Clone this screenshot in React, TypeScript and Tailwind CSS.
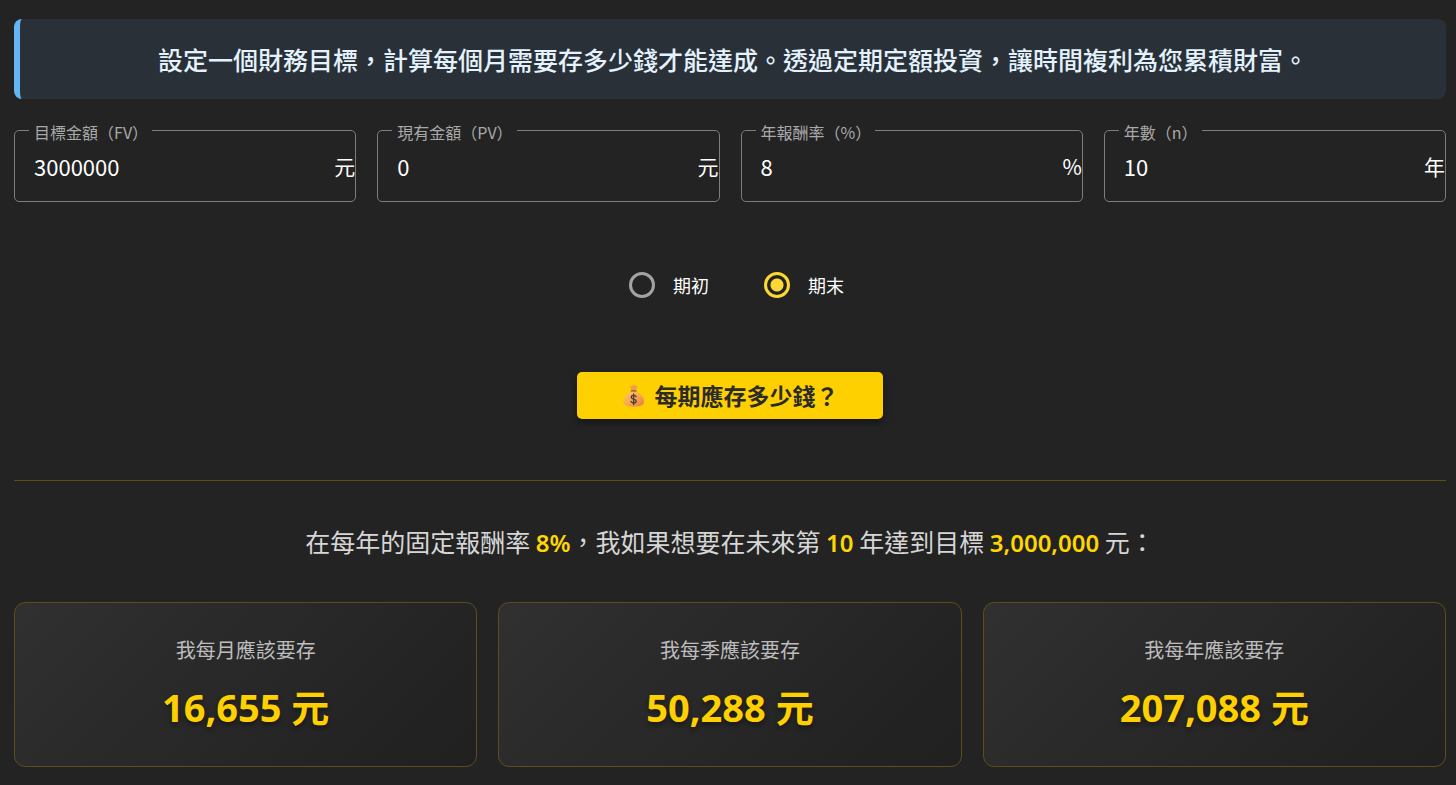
import { useState } from 'react';

type Field = { id: string; label: string; value: string; unit: string };

const fields: Field[] = [
  { id: 'fv', label: '目標金額（FV）', value: '3000000', unit: '元' },
  { id: 'pv', label: '現有金額（PV）', value: '0', unit: '元' },
  { id: 'rate', label: '年報酬率（%）', value: '8', unit: '%' },
  { id: 'years', label: '年數（n）', value: '10', unit: '年' },
];

const results = [
  { label: '我每月應該要存', value: '16,655 元' },
  { label: '我每季應該要存', value: '50,288 元' },
  { label: '我每年應該要存', value: '207,088 元' },
];

function NumberField({ field }: { field: Field }) {
  const [value, setValue] = useState(field.value);
  return (
    <fieldset className="min-w-0 rounded-[5px] border border-[#7d7d7d] pb-[9px] pl-[14px]">
      <legend className="pt-[4px] pr-[4px] pl-[5px] text-[16px] leading-[18px] text-[#a9a9a9]">
        <label htmlFor={field.id}>{field.label}</label>
      </legend>
      <div className="flex h-[51px] items-center pl-[5px] text-[22px] text-white">
        <input
          id={field.id}
          inputMode="decimal"
          value={value}
          onChange={(e) => setValue(e.target.value)}
          className="w-full min-w-0 flex-1 bg-transparent outline-none"
        />
        <span className="text-[21px]">{field.unit}</span>
      </div>
    </fieldset>
  );
}

function MoneyBag() {
  return (
    <svg viewBox="0 0 24 24" className="size-[23px]" aria-hidden="true">
      <defs>
        <linearGradient id="bag" x1="0" y1="0" x2="1" y2="1">
          <stop offset="0" stopColor="#ffc861" />
          <stop offset="0.5" stopColor="#f8a84d" />
          <stop offset="1" stopColor="#e07a48" />
        </linearGradient>
      </defs>
      <path d="M8.200 2.400c1-.5 1.700.3 2.500-.2.700-.6.900-1.100 1.600-1.100.8 0 1 .6 1.700 1.100.8.500 1.600-.2 2.300.300.500.700-1.500 2-2 3.800h-4.200C9.700 4.600 7.600 3.200 8.200 2.400z" fill="#ef9a4c" />
      <path d="M9.900 7.900h4.600c4.400 1.900 8.500 6 8.500 10.200 0 4.200-3.300 5.600-10.800 5.600S1.400 22.300 1.400 18.100c0-4.200 4.100-8.300 8.500-10.200z" fill="url(#bag)" />
      <rect x="9" y="6.200" width="6.400" height="2" rx="1" fill="#b5654a" />
      <path d="M14.700 13.300c-.4-1-1.300-1.400-2.600-1.400-1.500 0-2.500.7-2.500 1.900 0 2.700 5.200 1.200 5.200 4 0 1.300-1.100 2-2.600 2-1.500 0-2.500-.6-2.800-1.700M12.100 10.400v10.900" fill="none" stroke="#4f3a3c" strokeWidth="1.400" strokeLinecap="round" />
    </svg>
  );
}

export default function App() {
  const [timing, setTiming] = useState('end');
  const options = [
    { id: 'begin', label: '期初' },
    { id: 'end', label: '期末' },
  ];
  return (
    <main className="min-h-screen bg-[#232323] pt-[19px] pr-[10px] pb-[18px] pl-[14px] font-['Noto_Sans_CJK_TC',sans-serif]">
      <div className="flex h-[80px] items-center justify-center rounded-[8px] border-l-[6px] border-[#64b5f6] bg-[#293038] px-5">
        <p className="text-center text-[25px] leading-[34px] font-medium text-[#e3f2fd]">
          設定一個財務目標，計算每個月需要存多少錢才能達成。透過定期定額投資，讓時間複利為您累積財富。
        </p>
      </div>

      <form onSubmit={(e) => e.preventDefault()}>
        <div className="mt-[20px] grid grid-cols-4 gap-[21px]">
          {fields.map((f) => (
            <NumberField key={f.id} field={f} />
          ))}
        </div>

        <div role="radiogroup" aria-label="存款時點" className="mt-[70px] flex justify-center gap-[55px] pl-[13px]">
          {options.map((o) => (
            <label key={o.id} className="flex items-center gap-[18px] text-[18px] leading-[26px] text-white">
              <input
                type="radio"
                name="timing"
                checked={timing === o.id}
                onChange={() => setTiming(o.id)}
                className="size-[26px] appearance-none rounded-full border-[3px] border-[#a3a3a3] checked:border-[#fdd835] checked:bg-[radial-gradient(circle,#fdd835_6px,transparent_7px)]"
              />
              {o.label}
            </label>
          ))}
        </div>

        <div className="mt-[74px] flex justify-center">
          <button
            type="submit"
            className="flex h-[47px] w-[306px] items-center justify-center gap-[10px] rounded-[5px] bg-[#ffd000] text-[23px] font-bold text-[#2b2b2b] shadow-[0_4px_6px_rgba(0,0,0,0.4)]"
          >
            <MoneyBag />
            每期應存多少錢？
          </button>
        </div>
      </form>

      <section className="mt-[61px] border-t border-[#5c4d16] pt-[42px]">
        <p className="text-center text-[25px] leading-[36px] text-[#d6d6d6]">
          在每年的固定報酬率 <Highlight>8%</Highlight>，我如果想要在未來第 <Highlight>10</Highlight> 年達到目標{' '}
          <Highlight>3,000,000</Highlight> 元：
        </p>
        <div className="mt-[43px] grid grid-cols-3 gap-[21px]">
          {results.map((r) => (
            <article
              key={r.label}
              className="flex h-[165px] flex-col items-center rounded-[11px] border border-[#5c4e1a] bg-linear-135 from-[#303030] to-[#202020] pt-[33px]"
            >
              <h2 className="text-[20px] leading-[28px] text-[#bdbdbd]">{r.label}</h2>
              <p className="mt-[15px] font-['Noto_Sans','Noto_Sans_CJK_TC',sans-serif] text-[38px] leading-[56px] font-bold text-[#ffd000] text-shadow-[0_3px_5px_rgba(0,0,0,0.4)]">
                {r.value}
              </p>
            </article>
          ))}
        </div>
      </section>
    </main>
  );
}

function Highlight({ children }: { children: string }) {
  return (
    <strong className="font-['Noto_Sans','Noto_Sans_CJK_TC',sans-serif] text-[24px] leading-[24px] font-semibold text-[#ffd600]">
      {children}
    </strong>
  );
}
